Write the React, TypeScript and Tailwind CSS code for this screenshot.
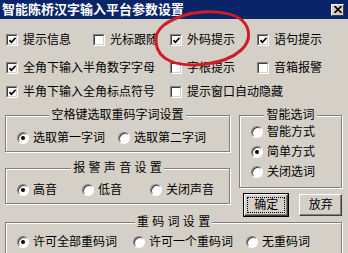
import React from 'react';

const Check = ({ on }: { on?: boolean }) => (
  <span className="flex h-[12px] w-[12px] shrink-0 border border-b-white border-l-[#808080] border-r-white border-t-[#808080]">
    <span className="flex flex-1 items-center justify-center border border-b-[#d4d0c8] border-l-[#404040] border-r-[#d4d0c8] border-t-[#404040] bg-white">
      {on && (
        <svg viewBox="0 0 7 7" className="h-[7px] w-[7px]">
          <path d="M0.5 3.2 L2.5 5.3 L6.6 0.8" stroke="black" strokeWidth="1.7" fill="none" />
        </svg>
      )}
    </span>
  </span>
);

const Radio = ({ on }: { on?: boolean }) => (
  <span className="flex h-[12px] w-[12px] shrink-0 items-center justify-center rounded-full border border-b-white border-l-[#808080] border-r-white border-t-[#808080] bg-white shadow-[inset_1px_1px_0_#404040]">
    {on && <span className="h-[4px] w-[4px] rounded-full bg-black" />}
  </span>
);

const CheckItem = ({ label, on, className = '' }: { label: string; on?: boolean; className?: string }) => (
  <label className={`flex items-center gap-[5px] whitespace-nowrap ${className}`}>
    <Check on={on} />
    <span className="leading-[16px]">{label}</span>
  </label>
);

const RadioItem = ({ label, on, className = '' }: { label: string; on?: boolean; className?: string }) => (
  <label className={`flex shrink-0 items-center gap-[4px] whitespace-nowrap ${className}`}>
    <Radio on={on} />
    <span className="leading-[16px]">{label}</span>
  </label>
);

const GroupBox = ({
  title,
  className = '',
  children,
}: {
  title: string;
  className?: string;
  children: React.ReactNode;
}) => (
  <fieldset
    className={`min-w-0 border border-[#808080] shadow-[1px_1px_0_#fff,inset_1px_1px_0_#fff] ${className}`}
  >
    <legend className="mx-auto bg-[#d4d0c8] px-[2px] leading-[12px]">{title}</legend>
    {children}
  </fieldset>
);

export default function App() {
  return (
    <div className="relative h-[253px] w-[348px] overflow-hidden bg-[#d4d0c8] font-['Liberation_Sans','Noto_Sans_CJK_SC',sans-serif] text-[12px] text-black">
      {/* title bar */}
      <div className="flex h-[19px] items-center justify-between bg-[#0a246a] pl-[2px] pr-[4px]">
        <span className="text-[13px] font-bold leading-[19px] text-white">智能陈桥汉字输入平台参数设置</span>
        <span className="flex h-[12px] w-[13px] items-center justify-center border border-b-[#404040] border-l-white border-r-[#404040] border-t-white bg-[#d4d0c8]">
          <svg viewBox="0 0 8 7" className="h-[7px] w-[8px]">
            <path d="M0.5 0 L7.5 7 M7.5 0 L0.5 7" stroke="black" strokeWidth="1.6" />
          </svg>
        </span>
      </div>

      {/* option checkboxes */}
      <div className="flex flex-col pl-[6px]">
        <div className="mt-[11px] grid h-[20px] grid-cols-[87px_77px_87px_1fr] items-center">
          <CheckItem label="提示信息" on />
          <CheckItem label="光标跟随" />
          <CheckItem label="外码提示" on />
          <CheckItem label="语句提示" on />
        </div>
        <div className="mt-[8px] grid h-[20px] grid-cols-[87px_77px_87px_1fr] items-center">
          <CheckItem label="全角下输入半角数字字母" on className="col-span-2" />
          <CheckItem label="字根提示" />
          <CheckItem label="音箱报警" />
        </div>
        <div className="mt-[4px] grid h-[20px] grid-cols-[87px_77px_87px_1fr] items-center">
          <CheckItem label="半角下输入全角标点符号" on className="col-span-2" />
          <CheckItem label="提示窗口自动隐藏" className="col-span-2" />
        </div>
      </div>

      {/* group boxes */}
      <div className="mt-[7px] flex pl-[5px]">
        <div className="flex w-[225px] flex-col">
          <GroupBox title="空格键选取重码字词设置" className="h-[43px]">
            <div className="mt-[9px] flex h-[16px] items-center pl-[11px]">
              <RadioItem label="选取第一字词" on className="w-[101px]" />
              <RadioItem label="选取第二字词" />
            </div>
          </GroupBox>
          <GroupBox title="报 警 声 音 设 置" className="mt-[10px] h-[42px]">
            <div className="mt-[8px] flex h-[16px] items-center pl-[11px]">
              <RadioItem label="高音" on className="w-[65px]" />
              <RadioItem label="低音" className="w-[68px]" />
              <RadioItem label="关闭声音" />
            </div>
          </GroupBox>
        </div>
        <div className="ml-[9px] flex w-[103px] flex-col">
          <GroupBox title="智能选词" className="h-[79px]">
            <div className="mt-[3px] flex flex-col gap-[4px] pl-[11px]">
              <RadioItem label="智能方式" className="h-[16px]" />
              <RadioItem label="简单方式" on className="h-[16px]" />
              <RadioItem label="关闭选词" className="h-[16px]" />
            </div>
          </GroupBox>
          <div className="mt-[5px] flex gap-[10px] pl-[4px]">
            <button className="h-[24px] w-[47px] border border-black p-0">
              <span className="flex h-full w-full border border-b-[#404040] border-l-white border-r-[#404040] border-t-white shadow-[inset_-1px_-1px_0_#808080]">
                <span className="m-[2px] flex flex-1 items-center justify-center border border-dotted border-black leading-[14px]">
                  确定
                </span>
              </span>
            </button>
            <button className="mt-[1px] flex h-[22px] w-[43px] items-center justify-center border border-b-[#404040] border-l-white border-r-[#404040] border-t-white p-0 leading-[14px] shadow-[inset_-1px_-1px_0_#808080]">
              放弃
            </button>
          </div>
        </div>
      </div>

      <div className="-mt-px pl-[5px]">
        <GroupBox title="重 码 词 设 置" className="h-[50px] w-[337px]">
          <div className="mt-[6px] flex h-[16px] items-center pl-[11px]">
            <RadioItem label="许可全部重码词" on className="w-[116px]" />
            <RadioItem label="许可一个重码词" className="w-[113px]" />
            <RadioItem label="无重码词" />
          </div>
        </GroupBox>
      </div>

      {/* hand-drawn red annotation */}
      <svg className="pointer-events-none absolute left-0 top-0" width="348" height="253" viewBox="0 0 348 253">
        <path
          d="M174 19 C200 8, 239 9, 247 27 C254 45, 236 60, 206 64 C175 68, 158 59, 156 43 C154 29, 166 20, 192 13"
          stroke="#d01c24"
          strokeWidth="3"
          fill="none"
          strokeLinecap="round"
        />
      </svg>
    </div>
  );
}
